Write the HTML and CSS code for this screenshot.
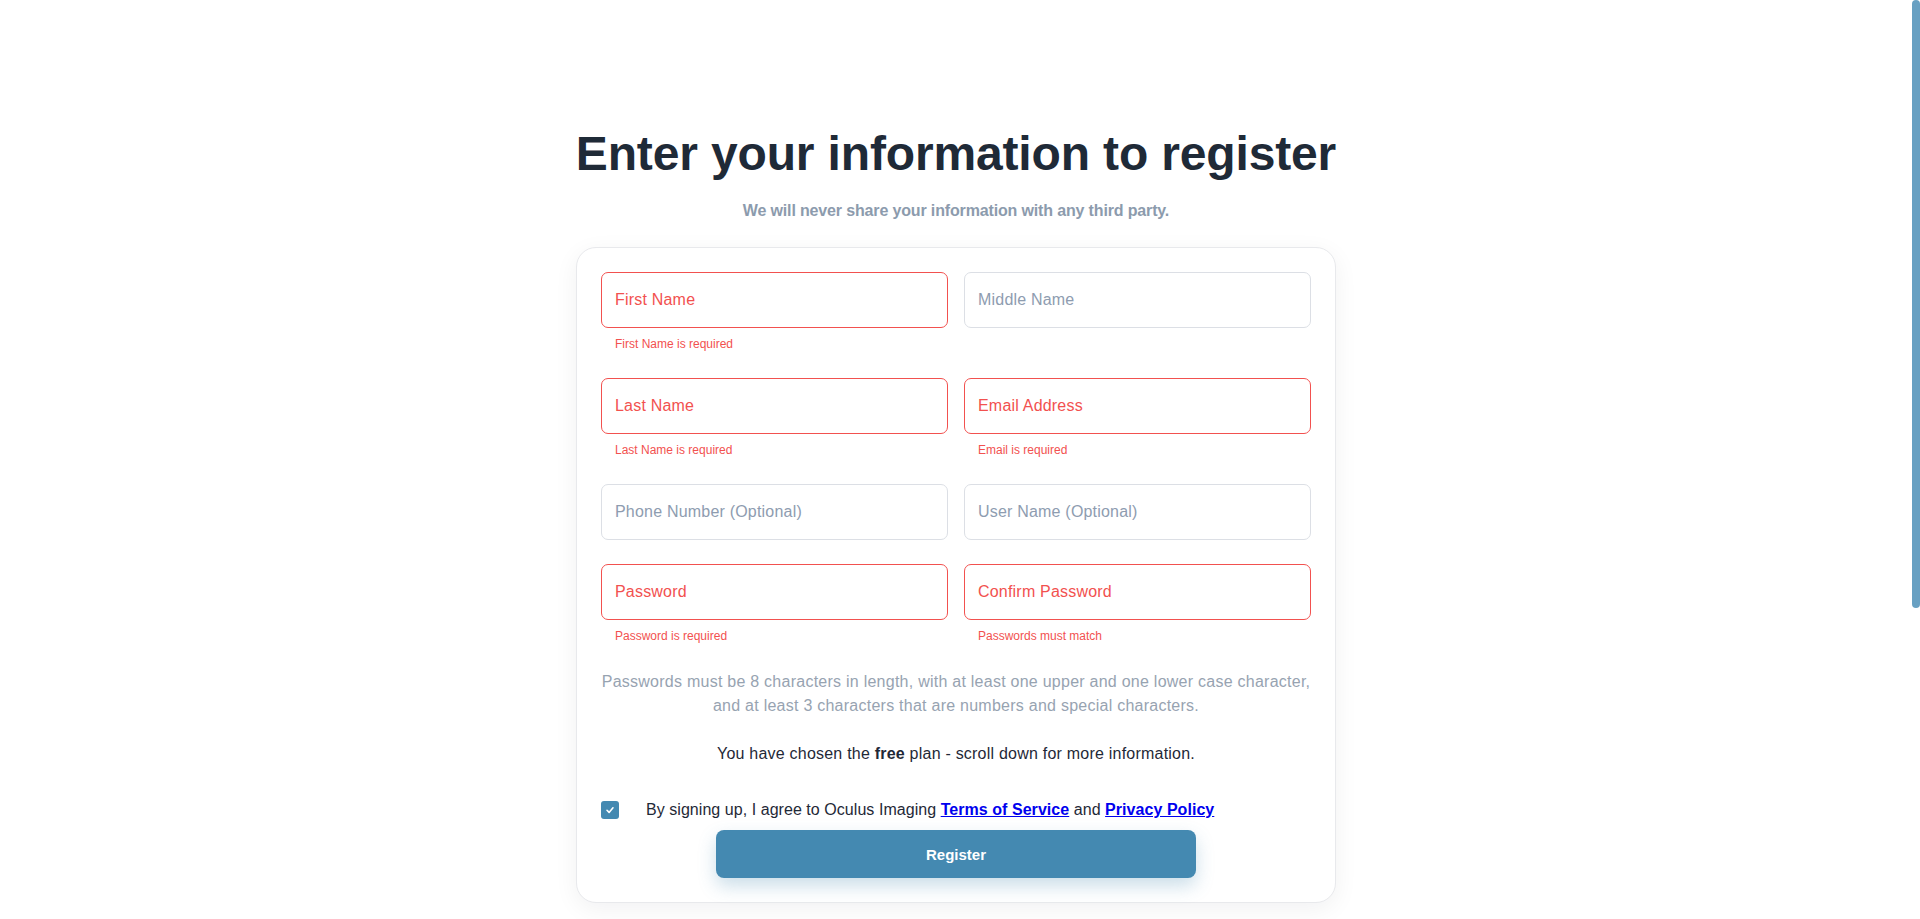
FILE: index.html
```html
<!DOCTYPE html>
<html lang="en">
<head>
<meta charset="utf-8">
<title>Register</title>
<link rel="stylesheet" href="styles.css">
</head>
<body>
<div class="scroll-thumb" aria-hidden="true"></div>
<main class="page">
  <h1 class="title">Enter your information to register</h1>
  <p class="subtitle">We will never share your information with any third party.</p>
  <form class="card">
    <div class="grid">
      <div class="field">
        <input class="input error" type="text" placeholder="First Name">
        <div class="msg">First Name is required</div>
      </div>
      <div class="field">
        <input class="input" type="text" placeholder="Middle Name">
      </div>
      <div class="field">
        <input class="input error" type="text" placeholder="Last Name">
        <div class="msg">Last Name is required</div>
      </div>
      <div class="field">
        <input class="input error" type="email" placeholder="Email Address">
        <div class="msg">Email is required</div>
      </div>
      <div class="field">
        <input class="input" type="text" placeholder="Phone Number (Optional)">
      </div>
      <div class="field">
        <input class="input" type="text" placeholder="User Name (Optional)">
      </div>
      <div class="field">
        <input class="input error" type="password" placeholder="Password">
        <div class="msg">Password is required</div>
      </div>
      <div class="field">
        <input class="input error" type="password" placeholder="Confirm Password">
        <div class="msg">Passwords must match</div>
      </div>
    </div>
    <p class="hint">Passwords must be 8 characters in length, with at least one upper and one lower case character,<br>and at least 3 characters that are numbers and special characters.</p>
    <p class="plan">You have chosen the <b>free</b> plan - scroll down for more information.</p>
    <label class="agree">
      <span class="check"><svg width="12" height="12" viewBox="0 0 12 12"><path d="M3 6.3 L5.1 8.4 L9 3.8" fill="none" stroke="#fff" stroke-width="1.6" stroke-linecap="round" stroke-linejoin="round"/></svg></span>
      <span>By signing up, I agree to Oculus Imaging <a href="#">Terms of Service</a> and <a href="#">Privacy Policy</a></span>
    </label>
    <div class="actions">
      <button class="btn" type="button">Register</button>
    </div>
  </form>
</main>
</body>
</html>
```
FILE: styles.css
```css
html {
  background: #ffffff;
}
html::-webkit-scrollbar {
  width: 8px;
}
html::-webkit-scrollbar-track {
  background: #ffffff;
}
html::-webkit-scrollbar-thumb {
  background: #68a0c2;
  border-radius: 4px;
}
body {
  margin: 0;
  padding-right: 8px;
  font-family: "Liberation Sans", Arial, sans-serif;
  color: #1f2937;
  background: #ffffff;
}
.scroll-thumb {
  position: fixed;
  top: 0;
  right: 0;
  width: 8px;
  height: 608px;
  border-radius: 4px;
  background: #68a0c2;
}
.page {
  min-height: 1389px;
  display: flex;
  flex-direction: column;
  align-items: center;
  padding-top: 125px;
  box-sizing: border-box;
}
.title {
  margin: 0;
  font-size: 48px;
  line-height: 58px;
  font-weight: 700;
  color: #1f2a37;
  letter-spacing: -0.15px;
}
.subtitle {
  margin: 16px 0 0;
  font-size: 16px;
  line-height: 24px;
  font-weight: 700;
  color: #8c9bad;
  letter-spacing: -0.15px;
}
.card {
  margin-top: 24px;
  width: 760px;
  box-sizing: border-box;
  padding: 24px;
  border: 1px solid #e8e9ec;
  border-radius: 20px;
  background: #fff;
  box-shadow: 0 6px 24px rgba(15, 23, 42, 0.06);
}
.grid {
  display: grid;
  grid-template-columns: 1fr 1fr;
  column-gap: 16px;
  row-gap: 24px;
}
.field {
  display: flex;
  flex-direction: column;
}
.input {
  height: 56px;
  box-sizing: border-box;
  border: 1px solid #dcdfe5;
  border-radius: 7px;
  padding: 0 13px;
  font-family: inherit;
  font-size: 16px;
  letter-spacing: 0.2px;
  color: #1f2937;
  background: #fff;
  outline: none;
}
.input::placeholder {
  color: #8e9cb0;
  opacity: 1;
}
.input.error {
  border-color: #f2514f;
}
.input.error::placeholder {
  color: #f2514f;
}
.msg {
  margin-top: 7px;
  padding-left: 14px;
  font-size: 12px;
  line-height: 19px;
  color: #f2514f;
}
.hint {
  margin: 24px 0 0;
  text-align: center;
  font-size: 16px;
  line-height: 24px;
  letter-spacing: 0.25px;
  color: #97a3b1;
}
.plan {
  margin: 24px 0 0;
  text-align: center;
  font-size: 16px;
  line-height: 24px;
  letter-spacing: 0.22px;
  color: #1f2937;
}
.plan b {
  font-weight: 700;
}
.agree {
  margin-top: 32px;
  display: flex;
  align-items: center;
  font-size: 16px;
  line-height: 24px;
  letter-spacing: 0.05px;
  color: #1f2937;
}
.check {
  width: 18px;
  height: 18px;
  flex: none;
  margin-right: 27px;
  border-radius: 3px;
  background: #4489b1;
  display: flex;
  align-items: center;
  justify-content: center;
}
.agree a {
  color: #0000ee;
  font-weight: 700;
  text-decoration: underline;
}
.actions {
  margin-top: 8px;
  display: flex;
  justify-content: center;
}
.btn {
  width: 480px;
  height: 48px;
  border: none;
  border-radius: 8px;
  background: #4489b1;
  color: #fff;
  font-family: inherit;
  font-size: 15px;
  font-weight: 700;
  box-shadow: 0 8px 18px rgba(68, 137, 177, 0.28);
  cursor: pointer;
}
```
